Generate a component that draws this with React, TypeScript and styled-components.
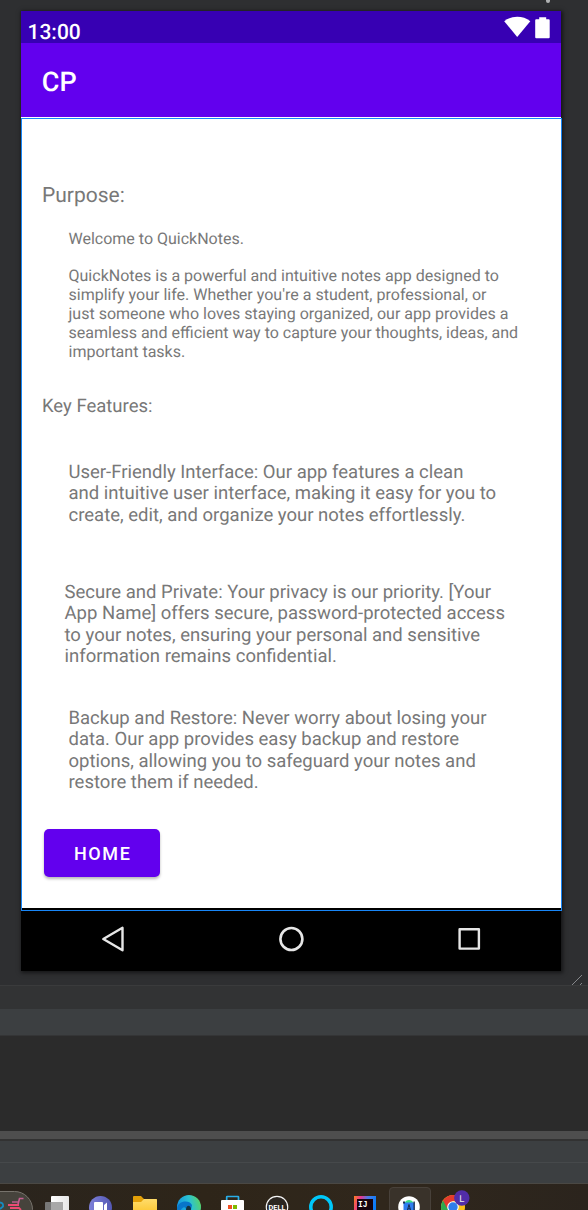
import React from "react";
import styled, { createGlobalStyle } from "styled-components";

const GlobalStyle = createGlobalStyle`
  * { box-sizing: border-box; }
  html, body { margin: 0; padding: 0; }
  body { background: #2e2f31; font-family: Roboto, "Liberation Sans", sans-serif; overflow: hidden; text-rendering: geometricPrecision; }
  svg { display: block; }
`;

const Screen = styled.main`
  width: 588px;
  height: 1210px;
  display: flex;
  flex-direction: column;
  overflow: hidden;
`;

const Canvas = styled.section`
  position: relative;
  height: 986px;
  flex: none;
  padding: 11px 0 0 21px;
  background: #2e2f31;
  border-bottom: 1px solid #3a3b3c;
`;

const TopDot = styled.i`
  position: absolute;
  left: 546px;
  top: 0;
  width: 4px;
  height: 3px;
  border-radius: 0 0 2px 2px;
  background: #afb1b3;
`;

const ResizeGrip = styled.svg`
  position: absolute;
  left: 571px;
  top: 974px;
`;

const Phone = styled.div`
  position: relative;
  width: 540px;
  height: 960px;
  display: flex;
  flex-direction: column;
  background: #000;
  box-shadow: 1px 1px 4px 1px rgba(0, 0, 0, 0.55);
`;

const StatusBar = styled.header`
  height: 32px;
  flex: none;
  display: flex;
  justify-content: space-between;
  background: #3700b3;
  color: #fff;
`;

const Clock = styled.time`
  padding: 9px 0 0 6.5px;
  font-size: 21px;
  line-height: 26px;
  font-weight: 500;
`;

const AppBar = styled.div`
  height: 74px;
  flex: none;
  padding: 0 0 0 20.8px;
  background: #6200ee;
  color: #fff;
  font-size: 27px;
  font-weight: 500;
  line-height: 78px;
`;

const Page = styled.div`
  height: 791px;
  flex: none;
  background: #fff;
  color: #787878;
  display: flex;
  flex-direction: column;
  align-items: flex-start;
`;

const SelectionFrame = styled.div`
  position: absolute;
  left: 0;
  top: 107px;
  width: 541px;
  height: 793px;
  border: 1px solid #1886f7;
  pointer-events: none;
`;

const TextBlock = styled.p<{ $size: number; $line: number; $left: number; $top: number }>`
  margin: ${(p) => p.$top}px 0 0 ${(p) => p.$left}px;
  font-size: ${(p) => p.$size}px;
  line-height: ${(p) => p.$line}px;
  white-space: pre;
`;

const HomeButton = styled.button`
  margin: 35.5px 0 0 23.4px;
  width: 115.6px;
  height: 48px;
  padding: 1px 0 0 1px;
  border: 0;
  border-radius: 5px;
  background: #6200ee;
  color: #fff;
  font: 500 18px/48px Roboto, sans-serif;
  letter-spacing: 1.6px;
  box-shadow: 0 2px 3px rgba(0, 0, 0, 0.28);
`;

const NavBar = styled.nav`
  flex: 1;
  display: flex;
  justify-content: space-between;
  align-items: center;
  padding: 0 79px 1px 79px;
`;

const Strip = styled.div<{ $h: number; $bg: string; $edge?: string }>`
  height: ${(p) => p.$h}px;
  flex: none;
  background: ${(p) => p.$bg};
  border-bottom: ${(p) => (p.$edge ? `1px solid ${p.$edge}` : "0")};
`;

const Taskbar = styled.footer`
  flex: 1;
  display: flex;
  background: linear-gradient(90deg, #2a241d 0, #2e2519 35%, #30271c 65%, #2b241d 100%);
`;

const Slot = styled.div<{ $active?: boolean }>`
  position: relative;
  width: 44px;
  height: 26px;
  flex: none;
  overflow: hidden;
  &::before {
    content: "";
    display: ${(p) => (p.$active ? "block" : "none")};
    position: absolute;
    left: 2px;
    top: 3px;
    width: 40px;
    height: 40px;
    border: 1px solid #48413a;
    border-radius: 4px;
    background: #39322a;
  }
  svg { position: relative; }
`;

const SearchEnd = styled.div`
  width: 35px;
  height: 26px;
  overflow: hidden;
`;

const purpose = `QuickNotes is a powerful and intuitive notes app designed to
simplify your life. Whether you're a student, professional, or
just someone who loves staying organized, our app provides a
seamless and efficient way to capture your thoughts, ideas, and
important tasks.`;

const friendly = `User-Friendly Interface: Our app features a clean
and intuitive user interface, making it easy for you to
create, edit, and organize your notes effortlessly.`;

const secure = `Secure and Private: Your privacy is our priority. [Your
App Name] offers secure, password-protected access
to your notes, ensuring your personal and sensitive
information remains confidential.`;

const backup = `Backup and Restore: Never worry about losing your
data. Our app provides easy backup and restore
options, allowing you to safeguard your notes and
restore them if needed.`;

const StatusIcons = () => (
  <svg width="60" height="32" viewBox="0 0 60 32" fill="#fff">
    <path d="M3.2 10.2C10.5 4.4 22 4.4 29.3 10.2L16.2 26Z" />
    <path d="M34.2 9.2Q34.2 8.2 35.2 8.2H38.2V6.2H45.2V8.2H47.7Q48.7 8.2 48.7 9.2V26.3Q48.7 27.3 47.7 27.3H35.2Q34.2 27.3 34.2 26.3Z" />
  </svg>
);

const apps: { name: string; active?: boolean; art: React.ReactNode }[] = [
  {
    name: "task view",
    art: (
      <>
        <rect x="16" y="12" width="18" height="20" rx="1" fill="url(#paper)" />
        <rect x="10" y="18" width="18" height="14" rx="1" fill="#777" />
        <rect x="16" y="18" width="12" height="14" fill="#a8a8a8" />
      </>
    ),
  },
  {
    name: "chat",
    art: (
      <>
        <circle cx="21.5" cy="23.5" r="11.5" fill="url(#chat)" />
        <rect x="15" y="18" width="9" height="12" rx="1" fill="#fff" />
        <path d="M25 21l3-2.5V28h-3z" fill="#fff" />
      </>
    ),
  },
  {
    name: "files",
    art: (
      <>
        <path d="M10 13q0-1 1-1h7l3 3h12q1 0 1 1v12H10z" fill="#e3a008" />
        <path d="M10 18h8l3-3h12q1 0 1 1v14H10z" fill="url(#folder)" />
      </>
    ),
  },
  {
    name: "edge",
    art: (
      <>
        <circle cx="22" cy="23" r="12" fill="url(#edge)" />
        <path d="M10 25c0-8 12-10 15-4l-1 5h-5c0-4-4-4-6 2z" fill="#0875c9" />
        <path d="M19 26c0-6 5-5 5-1 0 2-2 2-1 3h-4z" fill="#17323c" />
      </>
    ),
  },
  {
    name: "store",
    art: (
      <>
        <path d="M15.7 17v-4q0-.5.5-.5h10.800q.5 0 .5.500V17" fill="none" stroke="#29aee8" strokeWidth="1.7" />
        <rect x="10" y="16" width="23" height="16" rx="1" fill="#fff" />
        <rect x="17" y="21" width="4" height="4" fill="#f25022" />
        <rect x="22" y="21" width="4" height="4" fill="#7fba00" />
      </>
    ),
  },
  {
    name: "dell",
    art: (
      <>
        <circle cx="22" cy="23" r="10.7" fill="#2b2621" stroke="#f5f5f5" strokeWidth="1.2" />
        <text x="22" y="25.8" fill="#fff" fontSize="7" fontWeight="700" textAnchor="middle" textLength="17" lengthAdjust="spacingAndGlyphs" fontFamily="Roboto, sans-serif">DELL</text>
      </>
    ),
  },
  { name: "cortana", art: <circle cx="22" cy="23" r="10.2" fill="none" stroke="#00c8fa" strokeWidth="3.5" /> },
  {
    name: "intellij",
    art: (
      <>
        <rect x="11" y="12" width="22" height="22" fill="url(#idea)" />
        <rect x="14" y="15" width="16" height="15" fill="#16030d" />
        <text x="15" y="22.5" fill="#fff" fontSize="9" fontWeight="700" fontFamily="Liberation Mono, monospace" textLength="9.5" lengthAdjust="spacingAndGlyphs">IJ</text>
      </>
    ),
  },
  {
    name: "studio",
    active: true,
    art: (
      <>
        <circle cx="22" cy="23" r="10.8" fill="#fff" />
        <path d="M17.5 19C19 15 25 15 26.500 19z" fill="#3ddc84" />
        <rect x="16.5" y="18.5" width="11" height="8" fill="#2f7df0" />
        <path d="M16 17.500h2v2h-2zM26.500 17.500h1.300V26h-1.300z" fill="#172b4d" />
        <path d="M20.200 27l1.800-6.500 1.800 6.500M21 24.800h2" fill="none" stroke="#172b4d" strokeWidth="1" />
      </>
    ),
  },
  {
    name: "chrome",
    art: (
      <>
        <circle cx="22" cy="23" r="12" fill="#fbc116" />
        <path d="M22 23L12 16.500A12 12 0 0 0 14 32L22 23z" fill="#2da94f" />
        <path d="M12 16.500A12 12 0 0 1 32.500 17H22L16 24z" fill="#e33b2e" />
        <circle cx="22" cy="23" r="5.8" fill="#fff" />
        <circle cx="22" cy="23" r="4.7" fill="#2f7eea" />
        <circle cx="30.8" cy="14" r="7.7" fill="#512da8" />
        <text x="30.9" y="17.5" textAnchor="middle" fill="#eee" fontSize="9.5" fontFamily="Roboto, sans-serif">L</text>
      </>
    ),
  },
];

const Gradients = () => (
  <svg width="0" height="0">
    <defs>
      <linearGradient id="paper"><stop stopColor="#fff" /><stop offset="1" stopColor="#e6e6e6" /></linearGradient>
      <linearGradient id="chat"><stop stopColor="#7d80d8" /><stop offset="1" stopColor="#5458b4" /></linearGradient>
      <linearGradient id="folder" x2="0" y2="1"><stop stopColor="#ffdc6b" /><stop offset="1" stopColor="#fcc52d" /></linearGradient>
      <linearGradient id="edge" y1=".3"><stop stopColor="#1396e0" /><stop offset=".5" stopColor="#2bc3d2" /><stop offset="1" stopColor="#62d651" /></linearGradient>
      <linearGradient id="idea" x2="1" y2=".3"><stop stopColor="#fc801d" /><stop offset=".3" stopColor="#e8368f" /><stop offset=".6" stopColor="#4a7be8" /><stop offset="1" stopColor="#087cfa" /></linearGradient>
    </defs>
  </svg>
);

export default function App() {
  return (
    <Screen>
      <GlobalStyle />
      <Gradients />
      <Canvas>
        <TopDot />
        <Phone>
          <StatusBar>
            <Clock>13:00</Clock>
            <StatusIcons />
          </StatusBar>
          <AppBar>CP</AppBar>
          <Page>
            <TextBlock $size={21} $line={26} $left={21} $top={66}>Purpose:</TextBlock>
            <TextBlock $size={16} $line={19} $left={47.5} $top={20}>Welcome to QuickNotes.</TextBlock>
            <TextBlock $size={16.03} $line={19} $left={47.5} $top={18}>{purpose}</TextBlock>
            <TextBlock $size={18.5} $line={22} $left={21} $top={34}>Key Features:</TextBlock>
            <TextBlock $size={18.5} $line={21.5} $left={47.5} $top={44.5}>{friendly}</TextBlock>
            <TextBlock $size={18.5} $line={21.5} $left={43.5} $top={55.5}>{secure}</TextBlock>
            <TextBlock $size={18.5} $line={21.5} $left={47.5} $top={40}>{backup}</TextBlock>
            <HomeButton>HOME</HomeButton>
          </Page>
          <NavBar>
            <svg width="26" height="28" viewBox="0 0 26 28" fill="none" stroke="#e6e6e6" strokeWidth="2.4" strokeLinejoin="round">
              <path d="M22.5 2.8V25.2L3.3 14z" />
            </svg>
            <svg width="28" height="28" viewBox="0 0 28 28" fill="none" stroke="#e6e6e6" strokeWidth="2.6">
              <circle cx="14.4" cy="14" r="11" />
            </svg>
            <svg width="26" height="28" viewBox="0 0 26 28" fill="none" stroke="#e6e6e6" strokeWidth="2.4" strokeLinejoin="round">
              <rect x="3.6" y="4.3" width="19.3" height="19.3" />
            </svg>
          </NavBar>
          <SelectionFrame />
        </Phone>
        <ResizeGrip width="12" height="12" stroke="#85878a" strokeWidth="1">
          <path d="M1 11L11 1M9 11L11 9" />
        </ResizeGrip>
      </Canvas>
      <Strip $h={23} $bg="#323334" />
      <Strip $h={27} $bg="#3c3f41" $edge="#343536" />
      <Strip $h={95} $bg="#2b2b2b" />
      <Strip $h={8} $bg="#4e4e4e" />
      <Strip $h={2} $bg="#323232" />
      <Strip $h={22} $bg="#3c3f41" $edge="#46494b" />
      <Strip $h={21} $bg="#3c3f41" $edge="#4a4844" />
      <Taskbar>
        <SearchEnd>
          <svg width="35" height="26" viewBox="0 0 35 26" fill="none">
            <rect x="-40" y="7.5" width="72.5" height="38" rx="18" fill="#46433c" stroke="#77736c" />
            <path d="M0 18.500q3.500.5 3 4l-3 2.500" stroke="#168bc0" strokeWidth="1.8" />
            <path d="M23.500 14.500h-4l-1.500 6" stroke="#c65d91" strokeWidth="1.6" />
            <path d="M8 21h11M10 24h9l2 2" stroke="#ed4a73" strokeWidth="1.8" />
            <path d="M19 18h-7" stroke="#c65d91" strokeWidth="1.4" />
          </svg>
        </SearchEnd>
        {apps.map((app) => (
          <Slot key={app.name} $active={app.active}>
            <svg width="44" height="26" viewBox="0 0 44 26">{app.art}</svg>
          </Slot>
        ))}
      </Taskbar>
    </Screen>
  );
}
